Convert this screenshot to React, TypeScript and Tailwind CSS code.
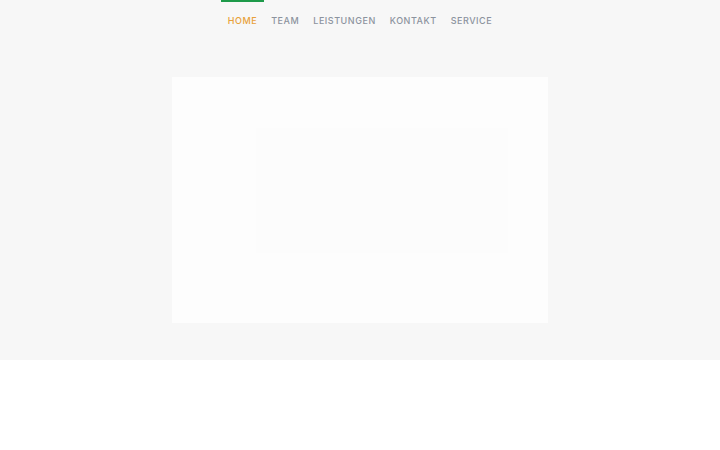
const NAV = ['Home', 'Team', 'Leistungen', 'Kontakt', 'Service'];

export default function App() {
  return (
    <div className="min-h-[450px] bg-white" style={{ fontFamily: 'Inter, "Liberation Sans", sans-serif' }}>
      <section className="h-[360px] bg-[#f7f7f7] pt-0">
        {/* Navigation */}
        <nav className="flex h-[36px] justify-center">
          {NAV.map((item, i) => (
            <a
              key={item}
              href="#"
              className={
                i === 0
                  ? 'border-t-2 border-[#1e9a4a] px-[7px] pt-[12px] text-[9px] font-medium uppercase tracking-[0.06em] text-[#e8a13a]'
                  : 'border-t-2 border-transparent px-[7px] pt-[12px] text-[9px] font-medium uppercase tracking-[0.06em] text-[#8c939e]'
              }
            >
              {item}
            </a>
          ))}
        </nav>

        {/* Content card */}
        <div className="mx-auto mt-[41px] h-[246px] w-[376px] bg-[#fdfdfd] pl-[84px] pt-[51px]">
          <div className="h-[125px] w-[252px] bg-[#fcfcfc]" />
        </div>
      </section>
    </div>
  );
}
